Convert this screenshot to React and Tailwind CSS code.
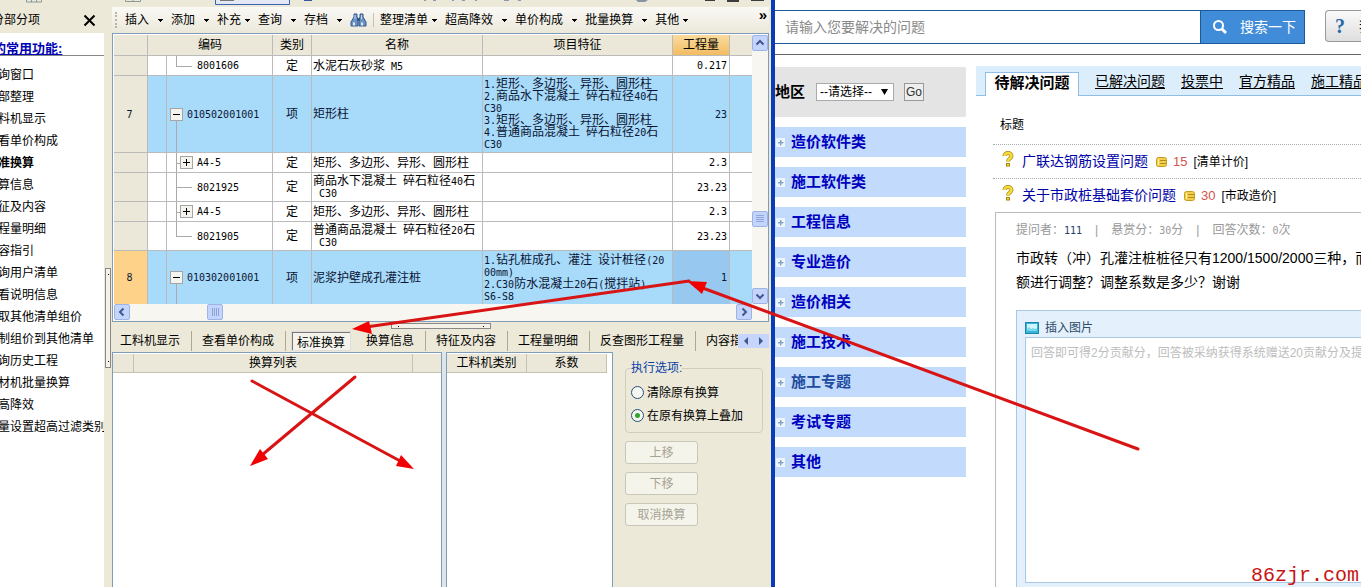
import React, { useState } from 'react';

const SIDE_ITEMS = [
  '查询窗口', '分部整理', '工料机显示', '查看单价构成', '标准换算', '换算信息', '特征及内容', '工程量明细',
  '内容指引', '查询用户清单', '查看说明信息', '提取其他清单组价', '复制组价到其他清单', '查询历史工程',
  '人材机批量换算', '超高降效', '批量设置超高过滤类别',
];

const MENUS = [
  { label: '插入' }, { label: '添加' }, { label: '补充', tight: true }, { label: '查询' }, { label: '存档' },
];

const MENUS_MORE = [
  { label: '整理清单', tight: true }, { label: '超高降效' }, { label: '单价构成' }, { label: '批量换算' },
  { label: '其他', tight: true },
];

const ROWS = [
  { code: '8001606', kind: 'last', type: '定', name: '水泥石灰砂浆 M5', qty: '0.217', h: 'h-[20px]' },
  {
    no: '7', code: '010502001001', kind: 'root', type: '项', name: '矩形柱', qty: '23', h: 'h-[77px]',
    feature: '1.矩形、多边形、异形、圆形柱\n2.商品水下混凝土 碎石粒径40石\nC30\n3.矩形、多边形、异形、圆形柱\n4.普通商品混凝土 碎石粒径20石\nC30',
  },
  { code: 'A4-5', kind: 'branch', type: '定', name: '矩形、多边形、异形、圆形柱', qty: '2.3', h: 'h-[20px]' },
  { code: '8021925', kind: 'leaf', type: '定', name: '商品水下混凝土 碎石粒径40石\n C30', qty: '23.23', h: 'h-[29px]' },
  { code: 'A4-5', kind: 'branch', type: '定', name: '矩形、多边形、异形、圆形柱', qty: '2.3', h: 'h-[20px]' },
  { code: '8021905', kind: 'last', type: '定', name: '普通商品混凝土 碎石粒径20石\n C30', qty: '23.23', h: 'h-[29px]' },
  {
    no: '8', code: '010302001001', kind: 'root', type: '项', name: '泥浆护壁成孔灌注桩', qty: '1', h: 'h-[54px]', current: true,
    feature: '1.钻孔桩成孔、灌注 设计桩径(20\n00mm)\n2.C30防水混凝土20石(搅拌站)\nS6-S8',
  },
];

const TABS = ['工料机显示', '查看单价构成', '标准换算', '换算信息', '特征及内容', '工程量明细', '反查图形工程量', '内容指引'];

const CATEGORIES = ['造价软件类', '施工软件类', '工程信息', '专业造价', '造价相关', '施工技术', '施工专题', '考试专题', '其他'];

// Latin runs take half the width of a Chinese character
const Mixed = ({ text }) =>
  text.split(/([\x20-\x7e]+)/).map((part, i) =>
    /^[\x20-\x7e]+$/.test(part) ? (
      <span key={i} className="font-['DejaVu_Sans_Mono',monospace] text-[10px]">{part}</span>
    ) : (
      part
    )
  );

const Lines = ({ text }) =>
  text.split('\n').map((line, i) => (
    <div key={i} className="h-3 whitespace-pre"><Mixed text={line} /></div>
  ));

const Caret = () => (
  <svg className="h-[3px] w-[5px]" viewBox="0 0 5 3" shapeRendering="crispEdges">
    <path d="M0 0h5v1h-1v1h-1v1h-1v-1h-1v-1h-1z" fill="#000" />
  </svg>
);

const MenuButton = ({ label, tight }) => (
  <button type="button" className={`flex shrink-0 items-center pr-2 whitespace-nowrap ${tight ? 'gap-1' : 'gap-[9px]'}`}>
    {label}
    <Caret />
  </button>
);

const Binoculars = () => (
  <svg className="h-[15px] w-[17px]" viewBox="0 0 17 15">
    <path d="M4 1h3v3l1 2v7H1V9l3-5z" fill="#6d93c2" stroke="#34578c" />
    <path d="M10 1h3v3l3 5v4H9V6l1-2z" fill="#6d93c2" stroke="#34578c" />
    <path d="M7 5h3v3H7z" fill="#34578c" />
    <path d="M3 9.500h2v3H3zM11 9.500h2v3h-2z" fill="#dbe8f7" />
    <path d="M5 2v4M11.500 2v4" stroke="#c8daf0" />
  </svg>
);

// Remains of the upper toolbar, scrolled under the window edge
const ToolbarRemains = () => (
  <svg className="block h-[7px] w-full" preserveAspectRatio="xMinYMin slice" viewBox="0 0 771 7">
    <path d="M26.500 0v2h15V0M31.500 0v2M36.500 0v2M125.500 0v1.500h15V0M133 0v2" fill="none" stroke="#8a9a9a" />
    <path d="M215.500 0v4.500h74V0" fill="#e4e8f4" stroke="#3a62b0" />
    <path d="M220 0h14v1h-14z" fill="#777" />
    <path d="M304 0h8v1h-8z" fill="#3a55a0" />
    <path d="M424 0h2v1h-2zM433 0h3v1h-3zM452 0h2v1h-2zM462 0h3v1h-3zM475 0h2v1h-2zM504 0h5v1h-5zM518 0h3v1h-3z" fill="#8b97b5" />
    <path d="M636 0h12l-3 2h-7z" fill="#8694a8" />
    <path d="M705 0h10v1h-10zM727 0h12v2h-12zM751 0h13v1h-13z" fill="#3c3c3c" />
  </svg>
);

const ARROWS = {
  up: 'M3.500 8.500l3.500-3.500 3.500 3.500',
  down: 'M3.500 5.500l3.500 3.500 3.500-3.500',
  left: 'M8.500 3.500l-3.500 3.500 3.500 3.500',
  right: 'M5.500 3.500l3.500 3.500-3.500 3.500',
};

const ScrollButton = ({ dir }) => (
  <button type="button" aria-label={dir} className="flex size-4 shrink-0 items-center justify-center rounded-[2px] border border-[#9db4e6] bg-[#c4d4fb]">
    <svg className="size-[14px] shrink-0" viewBox="0 0 14 14">
      <path d={ARROWS[dir]} fill="none" stroke="#40578f" strokeWidth="2" />
    </svg>
  </button>
);

const ScrollThumb = ({ vertical }) => (
  <div className="flex size-4 shrink-0 items-center justify-center rounded-[2px] border border-[#9db4e6] bg-[#c4d4fb]">
    <svg className={`size-2 ${vertical ? '' : 'rotate-90'}`} viewBox="0 0 8 8" shapeRendering="crispEdges">
      <path d="M0 .5h8M0 2.500h8M0 4.500h8M0 6.500h8" stroke="#8ca4dc" />
    </svg>
  </div>
);

const TreeCell = ({ kind, code }) => {
  const root = kind === 'root';
  const boxed = root || kind === 'branch';
  return (
    <td className="relative border-r border-b border-[#bbb] p-0">
      <span className={`absolute left-[9px] w-px bg-[#aaa] ${root ? 'top-1/2 bottom-0' : kind === 'last' ? 'top-0 h-1/2' : 'inset-y-0'}`} />
      {!root && <span className="absolute top-1/2 left-[9px] h-px w-4 bg-[#aaa]" />}
      <span className={`relative flex items-center ${root ? 'pl-[3px]' : 'pl-[13px]'}`}>
        {boxed && (
          <svg className="size-[13px] shrink-0" viewBox="0 0 13 13" shapeRendering="crispEdges">
            <rect x=".5" y=".5" width="12" height="12" fill="#f4f3ee" stroke="#a5a5a5" />
            <path d={root ? 'M3 6.500h7' : 'M3 6.500h7M6.500 3v7'} stroke="#000" />
          </svg>
        )}
        <span className={boxed ? 'pl-1' : 'pl-[17px]'}><Mixed text={code} /></span>
      </span>
    </td>
  );
};

const BillTable = () => (
  <table className="w-full table-fixed border-separate border-spacing-0 leading-[12px]">
    <colgroup>
      <col className="w-[34px]" />
      <col className="w-[19px]" />
      <col className="w-[106px]" />
      <col className="w-[39px]" />
      <col className="w-[171px]" />
      <col className="w-[190px]" />
      <col className="w-[57px]" />
      <col />
    </colgroup>
    <thead>
      <tr className="h-[21px] bg-[#ebe8d9] *:border-r *:border-b *:border-[#bbb] *:p-0 *:font-normal">
        <th />
        <th colSpan={2}>编码</th>
        <th>类别</th>
        <th>名称</th>
        <th>项目特征</th>
        <th className="bg-linear-to-b from-[#fadb9c] to-[#f2bc62]">工程量</th>
        <th className="border-r-0!" />
      </tr>
    </thead>
    <tbody>
      {ROWS.map((row, i) => (
        <tr key={i} className={`${row.h} ${row.no ? 'bg-[#a8dafa] text-[#0a1433]' : 'bg-white'}`}>
          <td className={`border-r border-b border-[#bbb] p-0 pr-[2px] text-center ${row.current ? 'bg-[#ffd28a]' : 'bg-[#ebe8d9]'}`}>
            <Mixed text={row.no || ''} />
          </td>
          <td className="border-r border-b border-[#bbb] p-0" />
          <TreeCell kind={row.kind} code={row.code} />
          <td className="border-r border-b border-[#bbb] p-0 text-center">{row.type}</td>
          <td className="border-r border-b border-[#bbb] p-0 pl-px"><Lines text={row.name} /></td>
          <td className="border-r border-b border-[#bbb] p-0 pl-px"><Lines text={row.feature || ''} /></td>
          <td className={`border-r border-b border-[#bbb] p-0 pr-[2px] text-right ${row.current ? 'bg-[#96c8f0]' : ''}`}>
            <Mixed text={row.qty} />
          </td>
          <td className="border-b border-[#bbb] p-0" />
        </tr>
      ))}
    </tbody>
  </table>
);

const Radio = ({ label, checked, onChange }) => (
  <label className="flex h-[23px] items-center gap-[3px] whitespace-nowrap">
    <input
      type="radio"
      name="mode"
      checked={checked}
      onChange={onChange}
      className="size-[13px] appearance-none rounded-full border border-[#24507c] bg-[#f6f6f1] checked:bg-[radial-gradient(circle,#2fa52f_0_2px,#f6f6f1_3px)]"
    />
    {label}
  </label>
);

const Sidebar = () => (
  <aside className="flex w-[104px] shrink-0 flex-col">
    <div className="flex h-[26px] items-center justify-between overflow-hidden pr-2 whitespace-nowrap">
      <span className="-ml-2">分部分项</span>
      <button type="button" aria-label="关闭">
        <svg className="block size-[13px]" viewBox="0 0 13 13">
          <path d="M1.500 1.500l10 10M11.500 1.500l-10 10" stroke="#000" strokeWidth="2" />
        </svg>
      </button>
    </div>
    <div className="flex-1 overflow-hidden bg-white whitespace-nowrap">
      <div className="h-[23px] border-b border-[#888] pt-2">
        <a href="#common" className="-ml-5 block text-[13px] leading-[16px] font-bold text-[#0000b4] underline">我的常用功能:</a>
      </div>
      <ul className="-ml-[14px] pt-2">
        {SIDE_ITEMS.map((item) => (
          <li key={item} className={`h-[22px] leading-[22px] ${item === '标准换算' ? 'font-bold' : ''}`}>{item}</li>
        ))}
      </ul>
    </div>
  </aside>
);

const ConversionPanel = () => {
  const [mode, setMode] = useState('add');

  return (
    <div className="flex min-h-0 flex-1">
      <div className="flex-1 border-x border-t border-[#7f9db9] bg-white pt-px">
        <table className="w-full table-fixed border-separate border-spacing-0 bg-[#ebe8d9] leading-[12px]">
          <thead>
            <tr className="h-[19px] *:border-r *:border-b *:border-[#c5c2b0] *:p-0 *:font-normal">
              <th className="w-[21px]" />
              <th>换算列表</th>
              <th className="w-[28px] border-r-0!" />
            </tr>
          </thead>
        </table>
      </div>
      <div className="w-[4px] bg-[#dfe3ea]" />
      <div className="w-[167px] border-x border-t border-[#7f9db9] bg-white pt-px pr-[5px]">
        <table className="w-full table-fixed border-separate border-spacing-0 bg-[#ebe8d9] leading-[12px]">
          <thead>
            <tr className="h-[19px] *:border-r *:border-b *:border-[#c5c2b0] *:p-0 *:font-normal">
              <th>工料机类别</th>
              <th>系数</th>
            </tr>
          </thead>
        </table>
      </div>
      <div className="w-[156px] pt-2 pl-3">
        <fieldset className="w-[138px] rounded-[4px] border border-[#d0cdbb] px-[5px] pb-[5px]">
          <legend className="leading-[16px] text-[#0a3fa8]">执行选项:</legend>
          <div className="pt-[5px]">
            <Radio label="清除原有换算" checked={mode === 'clear'} onChange={() => setMode('clear')} />
            <Radio label="在原有换算上叠加" checked={mode === 'add'} onChange={() => setMode('add')} />
          </div>
        </fieldset>
        <div className="flex flex-col items-start gap-2 pt-2">
          {['上移', '下移', '取消换算'].map((label) => (
            <button key={label} type="button" disabled className="h-[23px] w-[73px] rounded-[3px] border border-[#c9c7ba] bg-[#f5f4ea] leading-[20px] text-[#a5a394]">
              {label}
            </button>
          ))}
        </div>
      </div>
    </div>
  );
};

const BudgetWindow = () => (
  <section className="flex w-[775px] shrink-0 flex-col overflow-hidden border-r-4 border-[#0a3cb8] bg-[#ece9d8]">
    <ToolbarRemains />
    <div className="flex min-h-0 flex-1">
      <Sidebar />
      <div className="flex w-2 shrink-0 justify-center pt-[261px]">
        <div className="flex h-[100px] w-[6px] flex-col items-center justify-between border border-[#888] bg-[#f4f2e8] py-[5px]">
          <span className="size-px bg-black" />
          <span className="size-px bg-black" />
        </div>
      </div>
      <main className="flex min-w-0 flex-1 flex-col">
        <div className="flex h-[26px] shrink-0 items-center bg-linear-to-b from-[#faf9f5] to-[#ebe8da] pl-[3px]">
          <span className="mr-2 h-4 border-l-2 border-dotted border-[#b8b5a5]" />
          {MENUS.map((m) => <MenuButton key={m.label} {...m} />)}
          <button type="button" aria-label="查找"><Binoculars /></button>
          <span className="mx-[6px] h-[14px] w-px shrink-0 bg-[#c5c2b2]" />
          {MENUS_MORE.map((m) => <MenuButton key={m.label} {...m} />)}
          <button type="button" className="mr-[2px] ml-auto self-start font-['Liberation_Sans',sans-serif] text-[15px] leading-[16px] font-bold">»</button>
        </div>

        <div className="flex h-[289px] shrink-0 flex-col border border-[#7f9db9] bg-white pt-px pl-px">
          <div className="flex min-h-0 flex-1">
            <div className="min-w-0 flex-1 overflow-hidden"><BillTable /></div>
            <div className="flex w-4 shrink-0 flex-col items-center bg-[#f7f6f1]">
              <ScrollButton dir="up" />
              <div className="grow-[13]" />
              <ScrollThumb vertical />
              <div className="grow-[5]" />
              <ScrollButton dir="down" />
            </div>
          </div>
          <div className="flex h-[17px] shrink-0 items-start bg-[#f7f6f1] pr-4">
            <ScrollButton dir="left" />
            <div className="grow-[3]" />
            <ScrollThumb />
            <div className="grow-[20]" />
            <ScrollButton dir="right" />
          </div>
        </div>

        <div className="flex h-[8px] shrink-0 items-center justify-center">
          <div className="flex h-[6px] w-[100px] items-center justify-between border border-[#888] bg-[#f4f2e8] px-[6px]">
            <span className="size-px bg-black" />
            <span className="size-px bg-black" />
          </div>
        </div>

        <div className="-ml-[2px] flex h-[22px] shrink-0 items-center">
          <div className="flex min-w-0 flex-1 overflow-hidden whitespace-nowrap">
            {TABS.map((tab) => (
              <button
                key={tab}
                type="button"
                className={`h-5 shrink-0 leading-[20px] ${
                  tab === '标准换算'
                    ? 'mx-[5px] border-t-2 border-l-2 border-[#777] bg-[#f5f4ec] pr-[6px] pl-1 outline-1 -outline-offset-1 outline-[#ddd]'
                    : 'border-r border-[#aca899] pr-[11px] pl-[10px]'
                }`}
              >
                {tab}
              </button>
            ))}
          </div>
          <div className="flex h-[14px] w-[31px] shrink-0 items-center justify-around bg-[#c6d5fc]">
            <svg className="h-2 w-1" viewBox="0 0 4 8"><path d="M4 0v8L0 4z" fill="#40578f" /></svg>
            <svg className="h-2 w-1" viewBox="0 0 4 8"><path d="M0 0v8l4-4z" fill="#40578f" /></svg>
          </div>
        </div>

        <ConversionPanel />
      </main>
      <div className="w-[2px] shrink-0" />
    </div>
  </section>
);

const QuestionIcon = () => (
  <svg className="h-4 w-3 shrink-0" viewBox="0 0 12 16">
    <path d="M2.500 5c0-4 7-4 7 0 0 2.500-3.500 2.500-3.500 5.500" fill="none" stroke="#a88412" strokeWidth="4" />
    <path d="M2.500 5c0-4 7-4 7 0 0 2.500-3.500 2.500-3.500 5.500" fill="none" stroke="#f8dc3a" strokeWidth="2.600" />
    <rect x="4.500" y="12.500" width="3" height="2.500" fill="#f8dc3a" stroke="#a88412" />
  </svg>
);

const CoinIcon = () => (
  <svg className="h-[10px] w-[11px] shrink-0" viewBox="0 0 11 10">
    <rect x=".5" y=".5" width="10" height="9" rx="2" fill="#f2cf4a" stroke="#c89a1c" />
    <path d="M4 3.500h6M4 6.500h6" stroke="#b5891a" />
    <path d="M2.500 2v6" stroke="#fff3b0" />
  </svg>
);

const QuestionRow = ({ title, score, tag }) => (
  <div className="flex h-[34px] items-center border-t border-dotted border-[#aaa] pl-[9px] whitespace-nowrap">
    <span className="pb-[6px]"><QuestionIcon /></span>
    <a href="#question" className="ml-2 text-[14px] text-[#0000a8]">{title}</a>
    <span className="ml-2"><CoinIcon /></span>
    <span className="ml-[6px] text-[13px] text-[#d0544c]">{score}</span>
    <span className="ml-[6px]">[{tag}]</span>
  </div>
);

const AnswerSite = () => (
  <section className="flex min-w-0 flex-1 flex-col overflow-hidden bg-white">
    <header className="flex h-[55px] shrink-0 items-start border-b border-[#666] pt-[10px]">
      <input
        aria-label="搜索"
        placeholder="请输入您要解决的问题"
        className="h-[34px] min-w-0 flex-1 border-y border-[#1b5a98] bg-white pl-[10px] text-[14px] outline-none placeholder:text-[#8a8a8a]"
      />
      <button type="button" className="flex h-[34px] w-[105px] items-center gap-3 border border-[#1b5a98] bg-[#418cd9] pl-[11px] text-[14px] whitespace-nowrap text-white">
        <svg className="size-4" viewBox="0 0 16 16">
          <circle cx="6.500" cy="6.500" r="4.500" fill="none" stroke="#fff" strokeWidth="2" />
          <path d="M10 10l4 4" stroke="#fff" strokeWidth="3" />
        </svg>
        搜索一下
      </button>
      <button type="button" className="ml-5 flex h-8 w-[36px] items-center gap-[14px] overflow-hidden rounded-l-[4px] border border-r-0 border-[#999] bg-linear-to-b from-[#fafafa] to-[#dedede] pl-[9px] text-[14px] whitespace-nowrap">
        <span className="font-['Liberation_Serif',serif] text-[20px] font-bold text-[#2a68a8]">?</span>我要提问
      </button>
    </header>

    <div className="flex min-h-0 flex-1 gap-[10px]">
      <nav className="w-[191px] shrink-0 pt-3">
        <form className="flex h-[50px] items-center overflow-hidden rounded-r-[2px] bg-[#e4e4e4]">
          <label htmlFor="region" className="text-[15px] font-bold">地区</label>
          <span className="relative ml-[11px] flex">
            <select id="region" className="h-[18px] w-[78px] appearance-none border border-[#aaa] bg-white pl-[3px] leading-[14px]">
              <option>--请选择--</option>
            </select>
            <svg className="pointer-events-none absolute top-[6px] right-[6px] h-[6px] w-[7px]" viewBox="0 0 7 6">
              <path d="M0 0h7L3.500 6z" fill="#000" />
            </svg>
          </span>
          <button type="button" className="ml-[10px] h-[18px] w-5 border border-[#999] bg-[#eee] leading-[14px] text-[#333]">Go</button>
        </form>
        <ul className="flex flex-col gap-[10px] pt-[10px]">
          {CATEGORIES.map((name) => (
            <li key={name} className="flex h-[30px] items-center gap-[6px] bg-[#c2dafb] pl-px">
              <svg className="size-[9px]" viewBox="0 0 9 9" shapeRendering="crispEdges">
                <path d="M0 0h9v9H0z" fill="#eef5fd" />
                <path d="M2 4h5v1H2zM4 2h1v5H4z" fill="#6b8db5" stroke="#8fabc9" strokeWidth=".5" />
              </svg>
              <a href="#category" className={`text-[15px] font-bold ${name === '施工专题' ? 'text-[#1f4ca0]' : 'text-[#0000c0]'}`}>{name}</a>
            </li>
          ))}
        </ul>
      </nav>

      <div className="flex min-w-0 flex-1 flex-col pt-[11px]">
        <div className="flex h-[30px] shrink-0 items-stretch bg-[#dceefb] text-[14px] leading-[20px] whitespace-nowrap">
          <span className="w-[9px] shrink-0 border-b border-[#8fbfe6]" />
          <a href="#open" className="mt-[6px] w-[94px] shrink-0 border-x border-t border-[#8fbfe6] bg-white text-center text-[15px] font-bold">待解决问题</a>
          <div className="flex flex-1 items-center gap-4 border-b border-[#8fbfe6] pl-4">
            {['已解决问题', '投票中', '官方精品', '施工精品'].map((t) => (
              <a key={t} href="#list" className="underline underline-offset-2">{t}</a>
            ))}
          </div>
        </div>
        <div className="flex min-h-0 flex-1 flex-col pl-[17px]">
          <h2 className="h-12 shrink-0 pt-5 pl-[7px] leading-[18px]">标题</h2>
          <QuestionRow title="广联达钢筋设置问题" score="15" tag="清单计价" />
          <QuestionRow title="关于市政桩基础套价问题" score="30" tag="市政造价" />
          <article className="ml-[2px] flex flex-1 flex-col border-t border-l border-[#bbb] pt-2 pl-5 whitespace-nowrap">
            <div className="flex gap-[13px] leading-[18px] text-[#999]">
              <span>提问者：<a href="#user" className="text-[#1f3d70]"><Mixed text="111" /></a></span>
              <span>|</span>
              <span>悬赏分：<Mixed text="30" />分</span>
              <span>|</span>
              <span>回答次数：<Mixed text="0" />次</span>
            </div>
            <p className="pt-[6px] text-[14px] leading-[24px]">
              市政转（冲）孔灌注桩桩径只有1200/1500/2000三种，而定<br />
              额进行调整？调整系数是多少？谢谢
            </p>
            <div className="mt-4 flex flex-1 flex-col border-t border-l border-[#a8c8e4] bg-[#e4f1fd] pl-2">
              <button type="button" className="flex h-[26px] shrink-0 items-center gap-[6px] pt-[7px] text-[#2d4a68]">
                <svg className="h-3 w-[14px]" viewBox="0 0 14 12">
                  <rect x=".5" y=".5" width="13" height="11" fill="#35b5dc" stroke="#1b86ae" />
                  <rect x="2" y="2" width="10" height="7" fill="#d2f4fb" />
                  <path d="M2 9V7l2-2 2 2 2-1 2 1 2-1v3z" fill="#7ad6ea" />
                </svg>
                插入图片
              </button>
              <textarea
                aria-label="回答"
                placeholder="回答即可得2分贡献分，回答被采纳获得系统赠送20贡献分及提"
                className="mb-1 flex-1 resize-none overflow-hidden border-y border-l border-[#a8c8e4] bg-white pt-[6px] pl-[5px] leading-[18px] whitespace-pre outline-none placeholder:text-[#bdbdbd]"
              />
            </div>
          </article>
        </div>
      </div>
    </div>
  </section>
);

// Hand-drawn red pointers over both windows
const Annotations = () => (
  <svg className="pointer-events-none absolute top-0 left-0 h-[587px] w-[1361px]" viewBox="0 0 1361 587">
    <g stroke="#d81414" strokeWidth="3" strokeLinecap="round">
      <path d="M1138 449L700 287" />
      <path d="M689 281L366 327" />
      <path d="M252 381L402 462" />
      <path d="M355 377L262 455" />
    </g>
    <g fill="#f00000">
      <path d="M687 281l20 1-5 12z" />
      <path d="M352 329l17-8 3 13z" />
      <path d="M414 469l-13-14-5 11z" />
      <path d="M250 466l10-17 8 10z" />
    </g>
  </svg>
);

export default function App() {
  return (
    <div className="relative flex h-screen overflow-hidden font-['Liberation_Sans','Noto_Sans_CJK_SC',sans-serif] text-[12px] text-black">
      <BudgetWindow />
      <AnswerSite />
      <Annotations />
      <div className="absolute right-[2px] bottom-0 font-['Liberation_Mono',monospace] text-[20px] leading-[22px] text-[#c81414]">86zjr.com</div>
    </div>
  );
}
